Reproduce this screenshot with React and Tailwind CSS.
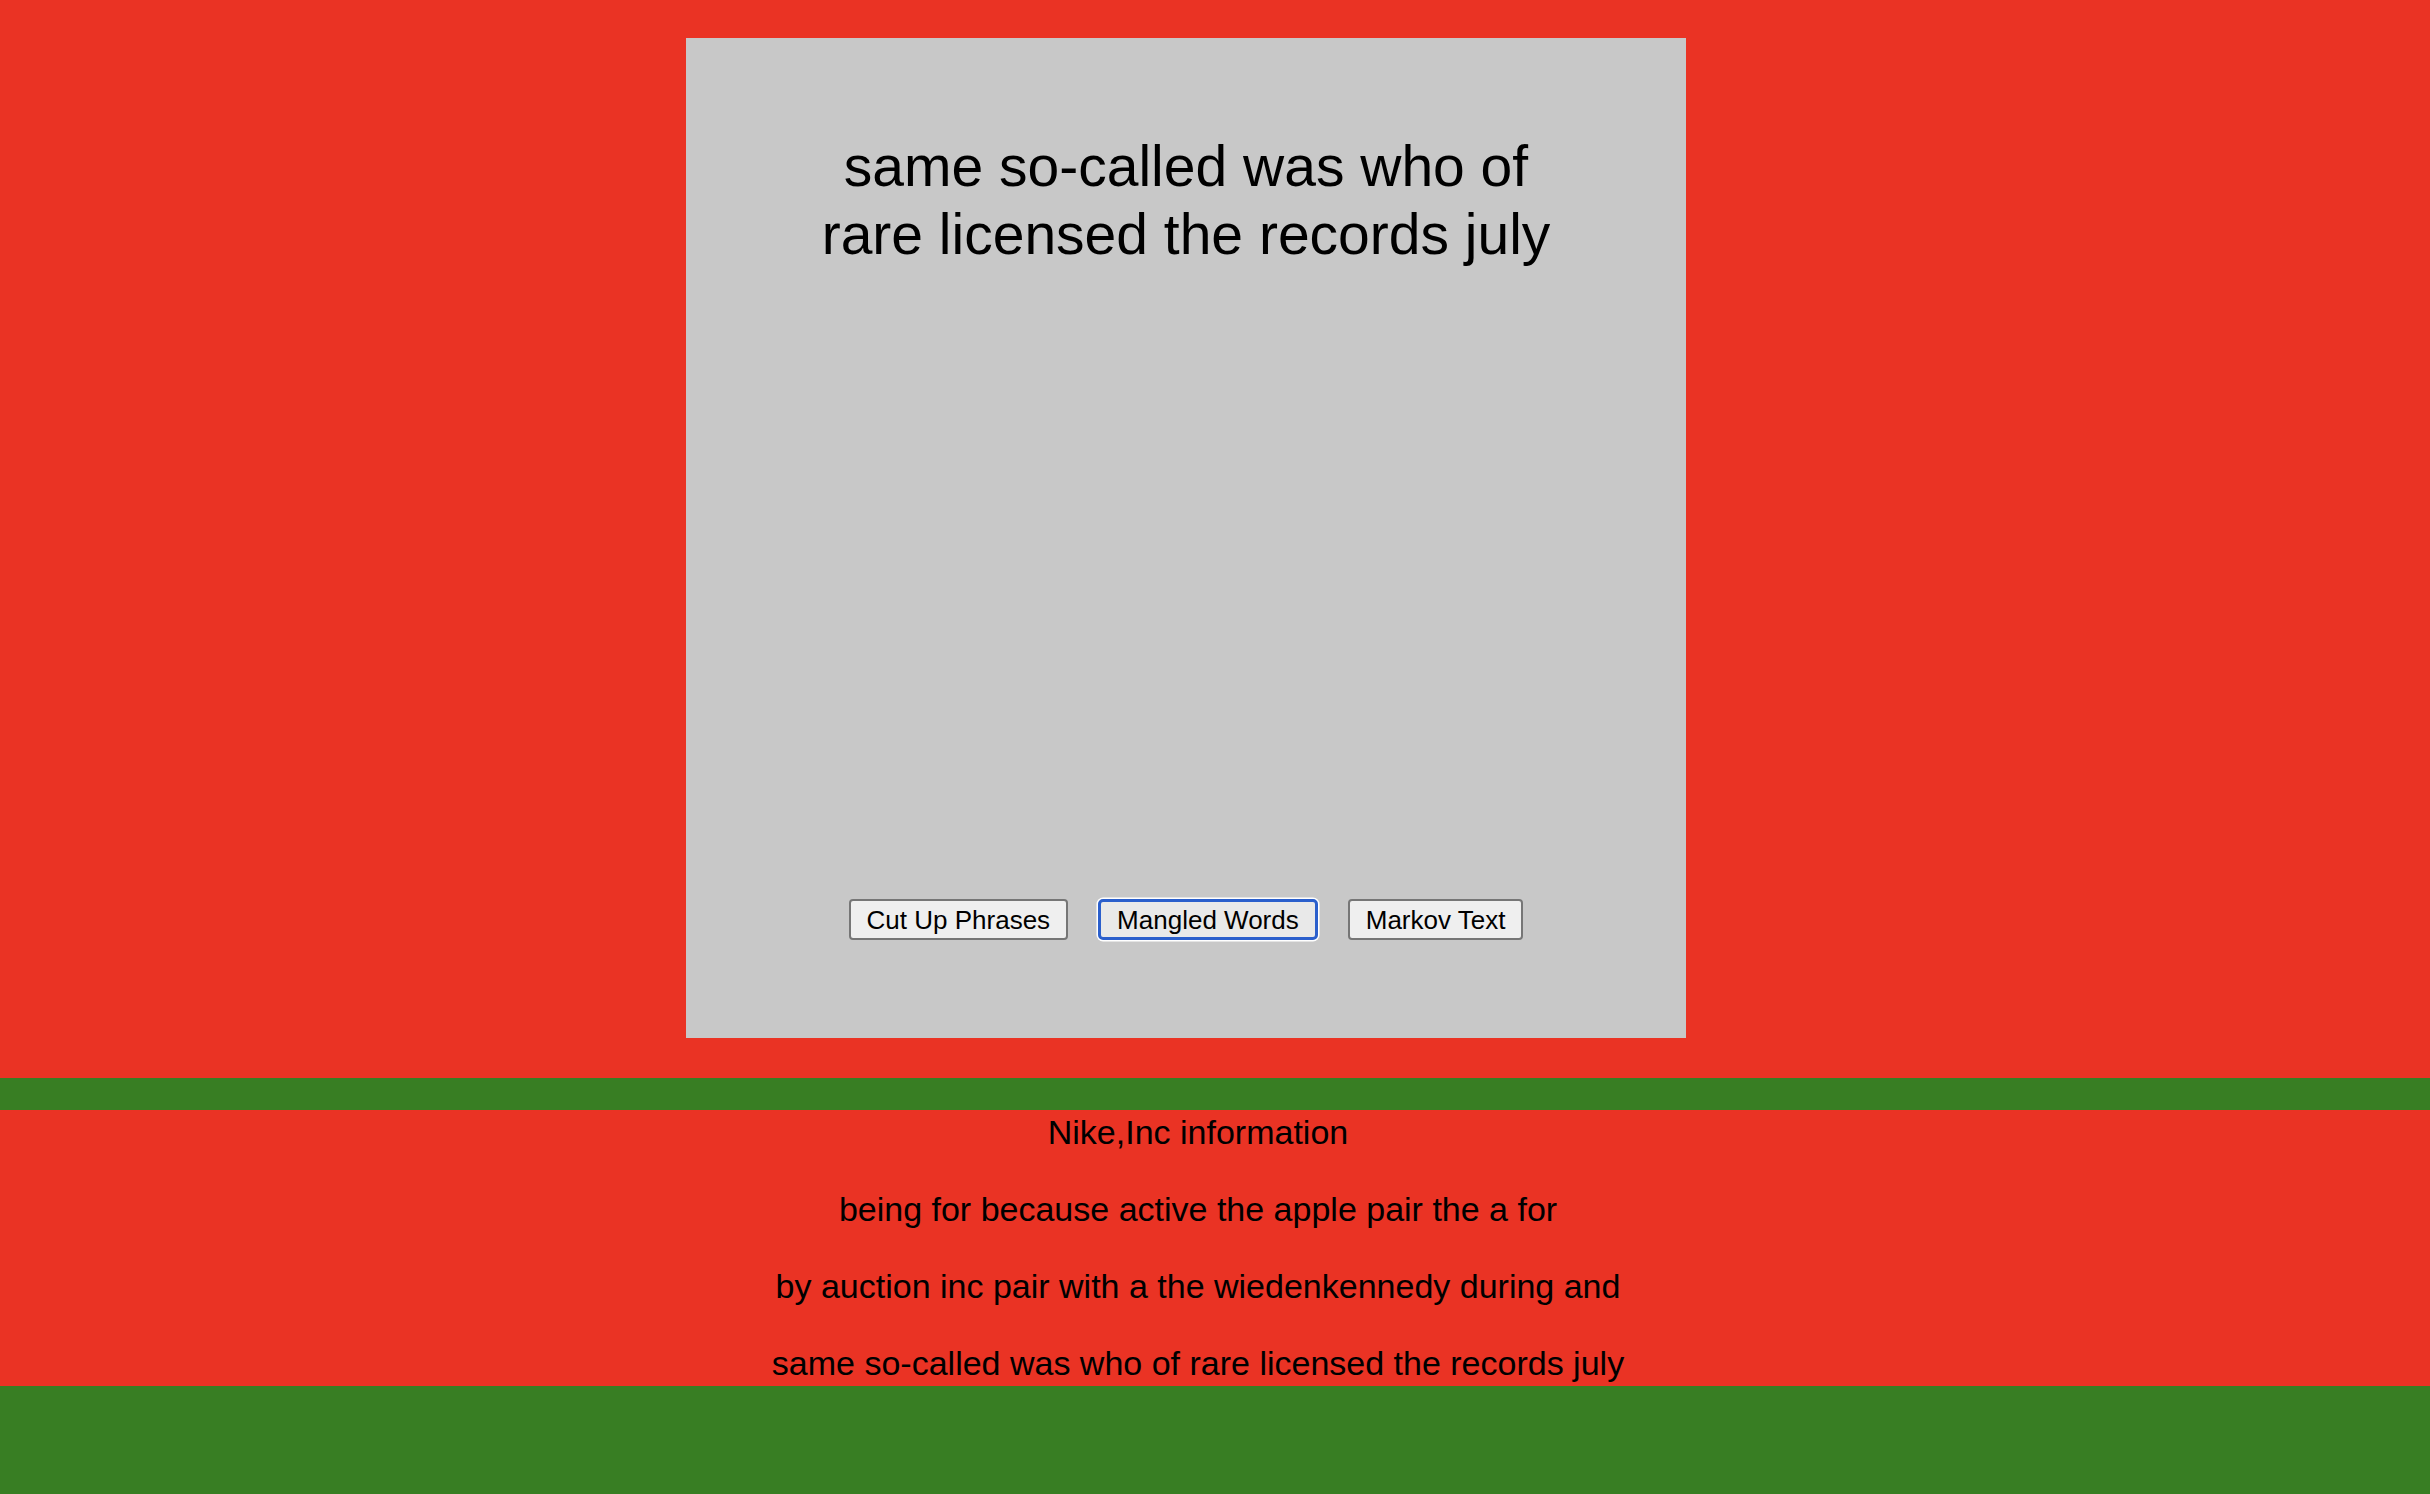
import React from 'react';

const lines = [
  'Nike,Inc information',
  'being for because active the apple pair the a for',
  'by auction inc pair with a the wiedenkennedy during and',
  'same so-called was who of rare licensed the records july',
];

const buttons = ['Cut Up Phrases', 'Mangled Words', 'Markov Text'];

export default function App() {
  return (
    <div className="min-h-screen bg-[#387e23] font-['Liberation_Sans',Arial,sans-serif] text-black">
      <div className="bg-[#ea3324] pt-[38px] pb-[40px]">
        <div className="ml-[686px] flex h-[1000px] w-[1000px] flex-col items-center bg-[#c8c8c8] pt-[94px]">
          <h1 className="max-w-[760px] text-center text-[57px] leading-[68px] font-normal">
            same so-called was who of rare licensed the records july
          </h1>
          <div className="mt-auto mb-[98px] flex gap-[30px]">
            {buttons.map((label, i) => (
              <button
                key={i}
                className={
                  i === 1
                    ? 'h-[41px] rounded-[5px] border-[3px] border-[#2b5fcc] bg-[#e9e9e9] px-[16px] text-[26px] leading-none shadow-[0_0_0_1.5px_#ffffff]'
                    : 'h-[41px] rounded-[4px] border-2 border-[#767676] bg-[#efefef] px-[16px] text-[26px] leading-none'
                }
              >
                {label}
              </button>
            ))}
          </div>
        </div>
      </div>
      <div className="mt-[32px] bg-[#ea3324] pr-[34px] text-center">
        {lines.map((line, i) => (
          <p key={i} className={`text-[34px] leading-[45px] ${i > 0 ? 'mt-[32px]' : ''}`}>
            {line}
          </p>
        ))}
      </div>
    </div>
  );
}
